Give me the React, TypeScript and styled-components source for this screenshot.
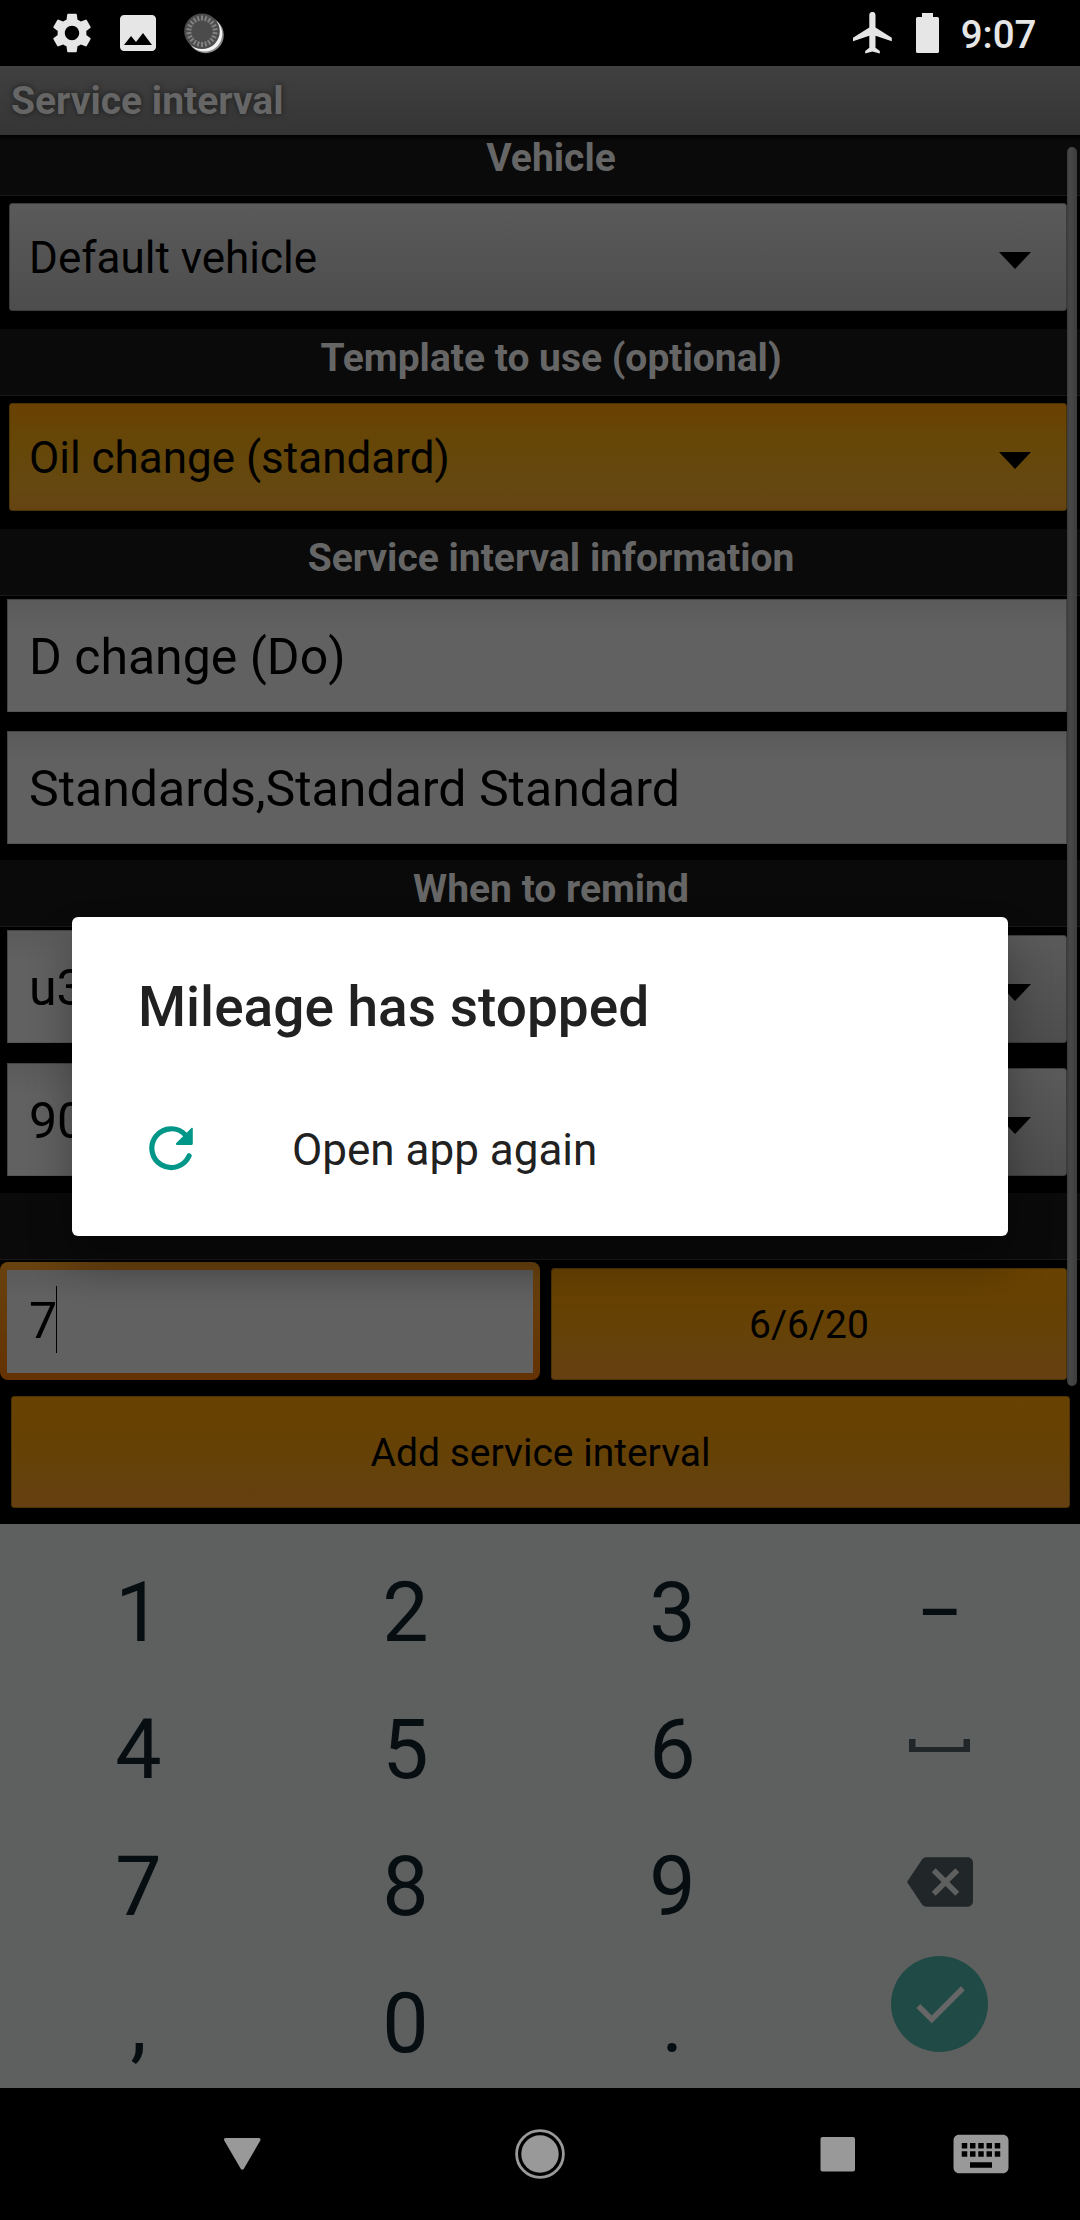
import React from 'react';
import styled, { createGlobalStyle } from 'styled-components';
import { MdSettings, MdImage, MdKeyboard, MdBackspace, MdCheck } from 'react-icons/md';

const GlobalStyle = createGlobalStyle`
  * { box-sizing: border-box; }
  body { margin: 0; background: #000; }
  svg { display: block; }
`;

const Screen = styled.div`
  position: relative;
  display: flex;
  flex-direction: column;
  width: 1080px;
  height: 2220px;
  overflow: hidden;
  background: #000;
  color: #000;
  font-family: Roboto, 'Noto Sans', sans-serif;
`;

const StatusBar = styled.header`
  display: flex;
  justify-content: space-between;
  align-items: center;
  height: 66px;
  padding: 0 43.5px 0 48px;
  color: #e6e6e6;
`;

const StatusGroup = styled.div<{ $gap: number }>`
  display: flex;
  align-items: center;
  gap: ${(p) => p.$gap}px;
`;

const BadgeSlot = styled.span`
  margin-left: 4px;
`;

const Clock = styled.span`
  margin-left: -2px;
  padding-top: 3px;
  font-size: 38.5px;
  font-weight: 500;
  line-height: 46px;
`;

const TitleBar = styled.h1`
  height: 69px;
  margin: 0;
  padding-left: 11px;
  background: linear-gradient(#404040, #353535);
  color: #666;
  font-size: 39px;
  font-weight: 700;
  line-height: 70px;
  text-shadow: 0 0 6px rgba(0, 0, 0, 0.55);
`;

const FormArea = styled.main`
  position: relative;
  display: flex;
  flex-direction: column;
  height: 1389px;
  overflow: hidden;
`;

const TopFade = styled.div`
  position: absolute;
  inset: 0 0 auto;
  height: 6px;
  background: linear-gradient(#000, rgba(0, 0, 0, 0));
`;

const SectionHeader = styled.h2<{ $top?: number }>`
  flex: none;
  height: 67px;
  margin: ${(p) => p.$top ?? 0}px 0 0;
  padding-left: 22px;
  border-bottom: 1px solid #191919;
  background: #0a0a0a;
  color: #666;
  font-size: 39px;
  font-weight: 700;
  line-height: 58px;
  text-align: center;
`;

const FieldRow = styled.div<{ $top: number }>`
  display: flex;
  flex: none;
  align-items: flex-end;
  margin: ${(p) => p.$top}px 13px 0 7px;
`;

const TextField = styled.div<{ $width?: number }>`
  flex: ${(p) => (p.$width ? `0 0 ${p.$width}px` : '1')};
  height: 113px;
  padding: 1px 0 0 21px;
  border: 1px solid #444;
  border-bottom-color: #555;
  background: linear-gradient(#5a5a5a, #616161 28%, #616161);
  font-size: 50px;
  line-height: 112px;
  white-space: nowrap;
`;

const FocusRing = styled.div`
  width: 540px;
  height: 118px;
  padding: 8px 7px 7px;
  border-radius: 8px;
  background: linear-gradient(#68420f, #643203);
`;

const FocusedField = styled.div`
  display: flex;
  align-items: center;
  height: 103px;
  padding: 0 0 2px 22px;
  background: linear-gradient(#5a5a5a, #616161 28%, #616161);
  font-size: 50px;
`;

const Caret = styled.span`
  width: 1px;
  height: 67px;
  margin: -3px 0 0 -1px;
  background: #000;
`;

const Dropdown = styled.div<{ $accent?: boolean }>`
  display: flex;
  flex: 1;
  align-items: center;
  justify-content: space-between;
  height: 108px;
  margin-left: 2px;
  padding: 2px 35px 0 19px;
  border: 1px solid ${(p) => (p.$accent ? '#4c3306' : '#3c3c3c')};
  border-radius: 3px;
  background: ${(p) =>
    p.$accent
      ? 'linear-gradient(#694103, #664708 35%, #654810 75%, #664412)'
      : 'linear-gradient(#5a5a5a, #4d4d4d)'};
  font-size: 44px;
`;

const Arrow = styled.span`
  width: 0;
  height: 0;
  margin-top: 4px;
  border: 16.5px solid transparent;
  border-top: 17px solid #000;
  border-bottom: 0;
`;

const ActionButton = styled.button<{ $width: number }>`
  width: ${(p) => p.$width}px;
  height: 112px;
  padding: 1px 0 0;
  border: 1px solid #4c3306;
  border-radius: 3px;
  background: linear-gradient(#684202, #664104 35%, #654209 65%, #664012);
  color: #000;
  font: 400 39px Roboto, 'Noto Sans', sans-serif;
`;

const SplitRow = styled.div`
  display: flex;
  flex: none;
  align-items: flex-end;
  gap: 11px;
  margin-top: 2px;
`;

const Footer = styled.div`
  flex: none;
  padding: 16px 0 0 11px;
`;

const ScrollThumb = styled.div`
  position: absolute;
  top: 12px;
  right: 3px;
  width: 10px;
  height: 1239px;
  border-radius: 5px;
  background: linear-gradient(90deg, #3c3c3c, #484848 30%, #3d3d3d);
`;

const Keypad = styled.section`
  display: grid;
  grid-template-columns: repeat(4, 267px);
  grid-template-rows: repeat(4, 137px);
  height: 564px;
  padding: 21px 0 0 5px;
  overflow: hidden;
  background: #5e605f;
  color: #070e12;
`;

const Key = styled.div<{ $lift?: number; $muted?: boolean }>`
  display: flex;
  align-items: center;
  justify-content: center;
  padding-bottom: ${(p) => p.$lift ?? 0}px;
  color: ${(p) => (p.$muted ? '#212629' : 'inherit')};
  font-size: 82.5px;
  line-height: 1;
`;

const DoneKey = styled.span`
  display: flex;
  align-items: center;
  justify-content: center;
  width: 97px;
  height: 96px;
  border-radius: 50%;
  background: #1f4a45;
  color: #666;
`;

const NavBar = styled.nav`
  display: flex;
  align-items: center;
  height: 132px;
  padding-left: 209px;
  color: #999;
`;

const NavGroup = styled.div`
  display: flex;
  gap: 232px;
  margin-right: 77px;
`;

const Dialog = styled.div`
  position: absolute;
  top: 917px;
  left: 72px;
  width: 936px;
  height: 319px;
  padding: 49px 66px 0;
  border-radius: 6px;
  background: #fff;
  color: #212121;
  box-shadow: 0 26px 44px rgba(0, 0, 0, 0.32);
`;

const DialogTitle = styled.h3`
  margin: 0;
  font-size: 55px;
  font-weight: 500;
  line-height: 82px;
`;

const DialogAction = styled.div`
  display: flex;
  align-items: center;
  height: 132px;
  margin-top: 34px;
  padding-left: 9px;
  font-size: 44px;
`;

const ActionLabel = styled.span`
  margin: 3px 0 0 97px;
`;

const ticks = Array.from({ length: 22 }, (_, i) => (i * 360) / 22);

const AppBadge = () => (
  <svg width="40" height="41" viewBox="0 0 40 41">
    <circle cx="21.6" cy="22" r="18.2" fill="#8a8a8a" />
    <circle cx="20.6" cy="21" r="17.6" fill="#f2f2f2" />
    <circle cx="18" cy="18.3" r="17.8" fill="#4b4b4b" />
    {ticks.map((a) => (
      <line
        key={a}
        x1="18"
        y1="2.6"
        x2="18"
        y2="7.6"
        stroke="#818181"
        strokeWidth="2"
        transform={`rotate(${a} 18 18.3)`}
      />
    ))}
  </svg>
);

const Airplane = () => (
  <svg width="39" height="42" viewBox="0 0 39 42" fill="currentColor">
    <path d="M16.3 3a3.1 3.1 0 0 1 6.2 0v12.5L38.8 25.7V29.2L22.5 23.8V35.8L26.8 39v2.6L19.4 39.5 12.2 41.6V39l4.1-3.2V23.8L0 29.2v-3.5l16.3-10.2z" />
  </svg>
);

const Battery = () => (
  <svg width="23" height="40" viewBox="0 0 23 40" fill="currentColor">
    <path d="M6 0h11v4h4.400a1.600 1.600 0 0 1 1.600 1.600V38.400a1.600 1.600 0 0 1-1.600 1.600H1.600A1.600 1.600 0 0 1 0 38.400V5.600A1.600 1.600 0 0 1 1.600 4H6z" />
  </svg>
);

const Reload = () => (
  <svg width="48" height="48" viewBox="0 0 48 48">
    <path
      d="M42.100 31.800A19.400 19.400 0 1 1 38.500 11"
      fill="none"
      stroke="#009688"
      strokeWidth="5.200"
      strokeLinecap="round"
    />
    <path d="M45.800 4.500V19.400a1.600 1.600 0 0 1-1.600 1.600H30.300c-1.500 0-1.900-1-1-2L44.200 4.200c.8-.8 1.600-.5 1.600.3z" fill="#009688" />
  </svg>
);

const SpaceMark = () => (
  <svg width="61" height="13" viewBox="0 0 61 13" fill="currentColor">
    <path d="M0 0h6.500v8h48V0H61v13H0z" />
  </svg>
);

const BackMark = () => (
  <svg width="66" height="66" viewBox="0 0 66 66" fill="currentColor">
    <path d="M17 17H49.500q3 0 1.500 3L35 47.500q-1.700 2.600-3.400 0L15.500 20q-1.500-3 1.500-3z" />
  </svg>
);

const HomeMark = () => (
  <svg width="66" height="66" viewBox="0 0 66 66">
    <circle cx="33" cy="33" r="23.400" fill="none" stroke="currentColor" strokeWidth="2.800" />
    <circle cx="33" cy="33" r="18.700" fill="currentColor" />
  </svg>
);

const RecentMark = () => (
  <svg width="66" height="66" viewBox="0 0 66 66" fill="currentColor">
    <rect x="15.500" y="16" width="34.500" height="34.500" rx="2" />
  </svg>
);

export default function App() {
  return (
    <>
      <GlobalStyle />
      <Screen>
        <StatusBar>
          <StatusGroup $gap={18}>
            <MdSettings size={48} />
            <MdImage size={48} />
            <BadgeSlot>
              <AppBadge />
            </BadgeSlot>
          </StatusGroup>
          <StatusGroup $gap={24}>
            <Airplane />
            <Battery />
            <Clock>9:07</Clock>
          </StatusGroup>
        </StatusBar>
        <TitleBar>Service interval</TitleBar>

        <FormArea>
          <SectionHeader $top={-6}>Vehicle</SectionHeader>
          <FieldRow $top={7}>
            <Dropdown>
              Default vehicle
              <Arrow />
            </Dropdown>
          </FieldRow>

          <SectionHeader $top={18}>Template to use (optional)</SectionHeader>
          <FieldRow $top={7}>
            <Dropdown $accent>
              Oil change (standard)
              <Arrow />
            </Dropdown>
          </FieldRow>

          <SectionHeader $top={18}>Service interval information</SectionHeader>
          <FieldRow $top={3}>
            <TextField>D change (Do)</TextField>
          </FieldRow>
          <FieldRow $top={19}>
            <TextField>Standards,Standard Standard</TextField>
          </FieldRow>

          <SectionHeader $top={16}>When to remind</SectionHeader>
          <FieldRow $top={3}>
            <TextField $width={526}>u3</TextField>
            <Dropdown>
              <span />
              <Arrow />
            </Dropdown>
          </FieldRow>
          <FieldRow $top={20}>
            <TextField $width={526}>90</TextField>
            <Dropdown>
              <span />
              <Arrow />
            </Dropdown>
          </FieldRow>

          <SectionHeader $top={17} />
          <SplitRow>
            <FocusRing>
              <FocusedField>
                7<Caret />
              </FocusedField>
            </FocusRing>
            <ActionButton $width={516}>6/6/20</ActionButton>
          </SplitRow>
          <Footer>
            <ActionButton $width={1059}>Add service interval</ActionButton>
          </Footer>
          <TopFade />
          <ScrollThumb />
        </FormArea>

        <Keypad>
          <Key>1</Key>
          <Key>2</Key>
          <Key>3</Key>
          <Key>−</Key>
          <Key>4</Key>
          <Key>5</Key>
          <Key>6</Key>
          <Key $muted $lift={10}>
            <SpaceMark />
          </Key>
          <Key>7</Key>
          <Key>8</Key>
          <Key>9</Key>
          <Key $muted $lift={11}>
            <MdBackspace size={66} />
          </Key>
          <Key>,</Key>
          <Key>0</Key>
          <Key>.</Key>
          <Key $lift={41}>
            <DoneKey>
              <MdCheck size={66} />
            </DoneKey>
          </Key>
        </Keypad>

        <NavBar>
          <NavGroup>
            <BackMark />
            <HomeMark />
            <RecentMark />
          </NavGroup>
          <MdKeyboard size={66} />
        </NavBar>

        <Dialog role="alertdialog">
          <DialogTitle>Mileage has stopped</DialogTitle>
          <DialogAction>
            <Reload />
            <ActionLabel>Open app again</ActionLabel>
          </DialogAction>
        </Dialog>
      </Screen>
    </>
  );
}
